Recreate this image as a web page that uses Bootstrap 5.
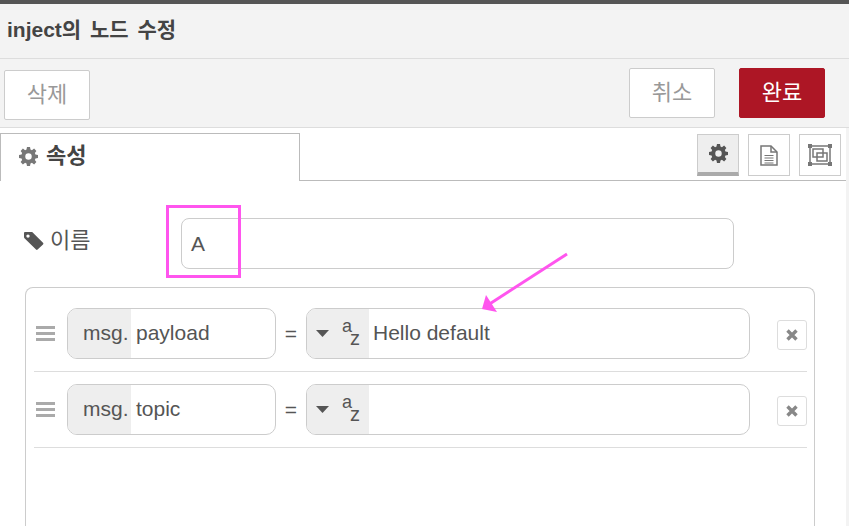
<!DOCTYPE html>
<html lang="ko">
<head>
    <meta charset="UTF-8">
    <meta name="viewport" content="width=device-width, initial-scale=1.0">
    <title>inject</title>
    <link href="https://cdn.jsdelivr.net/npm/bootstrap@5.3.3/dist/css/bootstrap.min.css" rel="stylesheet">
    <style>
        html, body { height: 100%; }
        body { position: relative; overflow: hidden; background: #fff; color: #555; font: 21px/1.2 "Liberation Sans", "Noto Sans CJK KR", sans-serif; }
        .top-strip { height: 4px; background: #555; }
        .title-bar { height: 55px; padding: 0 7px 2px; background: #f3f3f3; border-bottom: 1px solid #ddd; font-weight: 700; font-size: 21px; word-spacing: 3px; color: #444; }
        .tool-bar { height: 69px; padding: 9px 24px 0 4px; background: #f3f3f3; border-bottom: 1px solid #ddd; }
        .tool-btn { width: 86px; height: 50px; padding: 0; background: #fff; border: 1px solid #ccc; border-radius: 2px; color: #999; font-size: 22px; }
        .tool-btn.del { margin-top: 2px; }
        .tool-btn.done { background: #ad1625; border-color: #ad1625; color: #fff; margin-left: 24px; }
        .tab-strip { height: 53px; padding-top: 5px; border-bottom: 1px solid #bbb; }
        .tab-main { width: 300px; height: 48px; padding: 0 18px 2px; background: #fff; border: 1px solid #bbb; border-bottom: 0; font-weight: 700; font-size: 22px; color: #444; }
        .tab-icons { gap: 9px; padding: 1px 8px 0 0; }
        .tab-icon { width: 42px; height: 42px; background: #fff; border: 1px solid #ccc; }
        .tab-icon.on { background: #eee; border-bottom: 4px solid #aaa; }
        .name-row { padding: 37px 115px 0 24px; }
        .name-label { width: 157px; gap: 6px; padding-bottom: 4px; font-size: 22px; }
        .name-input { height: 51px; padding: 0 9px; border: 1px solid #ccc; border-radius: 8px; line-height: 49px; }
        .list-box { height: 239px; margin: 18px 34px 0 25px; padding: 20px 7px 0 8px; border: 1px solid #ccc; border-bottom: 0; border-radius: 8px 8px 0 0; }
        .kv-row { height: 64px; padding-bottom: 12px; border-bottom: 1px solid #ddd; }
        .kv-row + .kv-row { margin-top: 12px; }
        .grip { width: 33px; padding-left: 2px; }
        .grip i { display: block; width: 19px; height: 3px; margin: 3px 0; background: #aaa; }
        .field { height: 51px; border: 1px solid #ccc; border-radius: 10px; overflow: hidden; flex-shrink: 0; }
        .field-key { width: 209px; }
        .field-val { width: 444px; }
        .field-pre { background: #eee; height: 100%; }
        .pre-msg { width: 63px; padding-left: 15px; padding-bottom: 1px; }
        .pre-type { width: 62px; padding-left: 9px; }
        .field-txt { padding-left: 5px; padding-bottom: 1px; }
        .field-val .field-txt { padding-left: 4px; }
        .eq { width: 30px; text-align: center; }
        .az { position: relative; width: 22px; height: 32px; margin-left: 13px; font-size: 18px; }
        .az b { position: absolute; font-weight: 400; line-height: 1; }
        .az .a-top { left: 0; top: -1px; letter-spacing: -2px; }
        .az .z-low { left: 8px; top: 10px; font-size: 20px; }
        .rm-btn { width: 30px; height: 30px; margin: 3px 0 0 27px; border: 1px solid #ddd; border-radius: 3px; flex-shrink: 0; }
        .side-track { position: absolute; right: 0; top: 128px; bottom: 0; width: 3px; background: #f3f3f3; }
        .pink-box { position: absolute; left: 166px; top: 205px; width: 75px; height: 73px; border: 3px solid #ff55ee; }
        .pink-arrow { position: absolute; left: 470px; top: 245px; }
    </style>
</head>
<body>
    <div class="top-strip"></div>
    <div class="title-bar d-flex align-items-center">inject의 노드 수정</div>
    <div class="tool-bar d-flex align-items-start">
        <button class="tool-btn del" type="button">삭제</button>
        <button class="tool-btn ms-auto" type="button">취소</button>
        <button class="tool-btn done" type="button">완료</button>
    </div>

    <div class="tab-strip d-flex justify-content-between">
        <div class="tab-main d-flex align-items-center gap-2">
            <svg width="19" height="19" viewBox="0 0 20 20"><path fill="#777" fill-rule="evenodd" d="M8.4 0h3.2l.5 2.7 1.5.6L15.900 1.700l2.400 2.400-1.600 2.300.6 1.500 2.700.5v3.200l-2.700.5-.6 1.500 1.600 2.300-2.400 2.400-2.300-1.600-1.500.6-.5 2.700H8.400l-.5-2.700-1.500-.6-2.300 1.600-2.400-2.400 1.600-2.300-.6-1.500L0 11.600V8.400l2.700-.5.6-1.500-1.600-2.300 2.400-2.400 2.300 1.600 1.500-.6zM10 6.600a3.400 3.400 0 1 0 0 6.800 3.400 3.400 0 0 0 0-6.800z"/></svg>
            <span>속성</span>
        </div>
        <div class="tab-icons d-flex align-items-start">
            <div class="tab-icon on d-flex align-items-center justify-content-center">
                <svg width="19" height="19" viewBox="0 0 20 20"><path fill="#555" fill-rule="evenodd" d="M8.4 0h3.2l.5 2.7 1.5.6L15.900 1.700l2.400 2.400-1.600 2.300.6 1.500 2.700.5v3.200l-2.700.5-.6 1.500 1.600 2.300-2.400 2.400-2.300-1.600-1.500.6-.5 2.700H8.400l-.5-2.700-1.500-.6-2.300 1.600-2.400-2.400 1.600-2.300-.6-1.500L0 11.600V8.400l2.700-.5.6-1.500-1.600-2.300 2.400-2.400 2.300 1.600 1.500-.6zM10 6.600a3.400 3.400 0 1 0 0 6.800 3.400 3.400 0 0 0 0-6.800z"/></svg>
            </div>
            <div class="tab-icon d-flex align-items-center justify-content-center">
                <svg width="18" height="21" viewBox="0 0 18 21" fill="none" stroke="#777" stroke-width="1.500"><path d="M1 1h10l6 6v13H1z"/><path d="M11 1v6h6"/><path d="M4.500 10.500h9M4.500 13h9M4.500 15.500h9M4.500 18h9" stroke-width="1.200"/></svg>
            </div>
            <div class="tab-icon d-flex align-items-center justify-content-center">
                <svg width="24" height="22" viewBox="0 0 24 22" fill="none" stroke="#777" stroke-width="1.500"><rect x="2" y="2" width="20" height="18"/><rect x="5" y="5" width="10" height="8"/><rect x="9" y="9" width="10" height="8"/><g fill="#777" stroke="none"><rect x="0" y="0" width="4" height="4"/><rect x="20" y="0" width="4" height="4"/><rect x="0" y="18" width="4" height="4"/><rect x="20" y="18" width="4" height="4"/></g></svg>
            </div>
        </div>
    </div>

    <div class="name-row d-flex align-items-center">
        <div class="name-label flex-shrink-0 d-flex align-items-center">
            <svg width="20" height="18" viewBox="0 0 20 18"><path fill="#555" fill-rule="evenodd" d="M1 0h7.200L19 10.800q.8.800 0 1.600l-5.400 5.200q-.8.800-1.600 0L1 6.800Q0 6 0 5V1q0-1 1-1zm3 2.400a1.700 1.700 0 1 0 0 3.400 1.700 1.700 0 0 0 0-3.400z"/></svg>
            <span>이름</span>
        </div>
        <div class="name-input flex-grow-1">A</div>
    </div>

    <div class="list-box">
        <div class="kv-row d-flex align-items-center">
            <div class="grip"><i></i><i></i><i></i></div>
            <div class="field field-key d-flex align-items-center">
                <div class="field-pre pre-msg d-flex align-items-center">msg.</div>
                <div class="field-txt">payload</div>
            </div>
            <div class="eq">=</div>
            <div class="field field-val d-flex align-items-center">
                <div class="field-pre pre-type d-flex align-items-center">
                    <svg width="13" height="7" viewBox="0 0 13 7"><path fill="#555" d="M0 0h13L6.500 7z"/></svg>
                    <div class="az"><b class="a-top">a</b><b class="z-low">z</b></div>
                </div>
                <div class="field-txt">Hello default</div>
            </div>
            <div class="rm-btn d-flex align-items-center justify-content-center">
                <svg width="12" height="12" viewBox="0 0 12 12"><path stroke="#888" stroke-width="3.400" d="M1.500 1.500l9 9M10.500 1.500l-9 9"/></svg>
            </div>
        </div>
        <div class="kv-row d-flex align-items-center">
            <div class="grip"><i></i><i></i><i></i></div>
            <div class="field field-key d-flex align-items-center">
                <div class="field-pre pre-msg d-flex align-items-center">msg.</div>
                <div class="field-txt">topic</div>
            </div>
            <div class="eq">=</div>
            <div class="field field-val d-flex align-items-center">
                <div class="field-pre pre-type d-flex align-items-center">
                    <svg width="13" height="7" viewBox="0 0 13 7"><path fill="#555" d="M0 0h13L6.500 7z"/></svg>
                    <div class="az"><b class="a-top">a</b><b class="z-low">z</b></div>
                </div>
            </div>
            <div class="rm-btn d-flex align-items-center justify-content-center">
                <svg width="12" height="12" viewBox="0 0 12 12"><path stroke="#888" stroke-width="3.400" d="M1.500 1.500l9 9M10.500 1.500l-9 9"/></svg>
            </div>
        </div>
    </div>

    <div class="side-track"></div>

    <!-- annotations drawn on top of the screenshot -->
    <div class="pink-box"></div>
    <svg class="pink-arrow" width="100" height="70" viewBox="0 0 100 70">
        <path d="M97 9L18 60" stroke="#ff55ee" stroke-width="3" fill="none"/>
        <path d="M12 64L16 50 27 67z" fill="#ff55ee"/>
    </svg>
</body>
</html>
